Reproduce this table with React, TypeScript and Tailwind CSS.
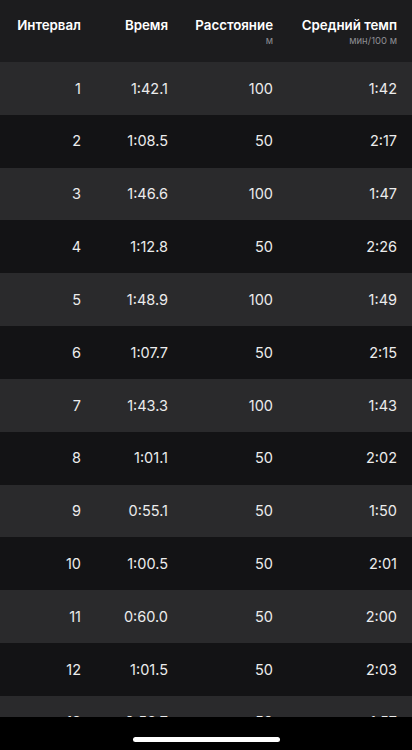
import React from "react";

const rows: [string, string, string, string][] = [
  ["1", "1:42.1", "100", "1:42"],
  ["2", "1:08.5", "50", "2:17"],
  ["3", "1:46.6", "100", "1:47"],
  ["4", "1:12.8", "50", "2:26"],
  ["5", "1:48.9", "100", "1:49"],
  ["6", "1:07.7", "50", "2:15"],
  ["7", "1:43.3", "100", "1:43"],
  ["8", "1:01.1", "50", "2:02"],
  ["9", "0:55.1", "50", "1:50"],
  ["10", "1:00.5", "50", "2:01"],
  ["11", "0:60.0", "50", "2:00"],
  ["12", "1:01.5", "50", "2:03"],
  ["13", "0:58.7", "50", "1:57"],
];

const grid = "grid grid-cols-[81px_87px_105px_124px] pr-[15px]";

export default function App() {
  return (
    <div
      className="w-[412px] h-[750px] flex flex-col bg-black overflow-hidden"
      style={{ fontFamily: "Inter, 'Noto Sans', sans-serif" }}
    >
      <div className="flex-1 overflow-hidden">
        <div className={`${grid} h-[62px] bg-[#1c1c1e] pt-[16px] text-white`}>
          <div className="text-right text-[13.3px] font-semibold leading-[18px]">Интервал</div>
          <div className="text-right text-[13.3px] font-semibold leading-[18px]">Время</div>
          <div className="flex flex-col items-end">
            <div className="text-[13.3px] font-semibold leading-[18px]">Расстояние</div>
            <div className="text-[9.5px] leading-[12px] text-[#8e8e93] mt-[1px]">м</div>
          </div>
          <div className="flex flex-col items-end">
            <div className="text-[13.3px] font-semibold leading-[18px]">Средний темп</div>
            <div className="text-[9.5px] leading-[12px] text-[#8e8e93] mt-[1px]">мин/100 м</div>
          </div>
        </div>
        {rows.map((r, i) => (
          <div
            key={i}
            className={`${grid} h-[52.83px] items-center text-[14.5px] text-[#ececec] ${
              i % 2 === 0 ? "bg-[#2a2a2c]" : "bg-[#131315]"
            }`}
          >
            <div className="text-right">{r[0]}</div>
            <div className="text-right">{r[1]}</div>
            <div className="text-right">{r[2]}</div>
            <div className="text-right">{r[3]}</div>
          </div>
        ))}
      </div>
      <div className="h-[33px] shrink-0 bg-black flex justify-center pt-[20px]">
        <div className="w-[147px] h-[5px] rounded-full bg-white" />
      </div>
    </div>
  );
}
